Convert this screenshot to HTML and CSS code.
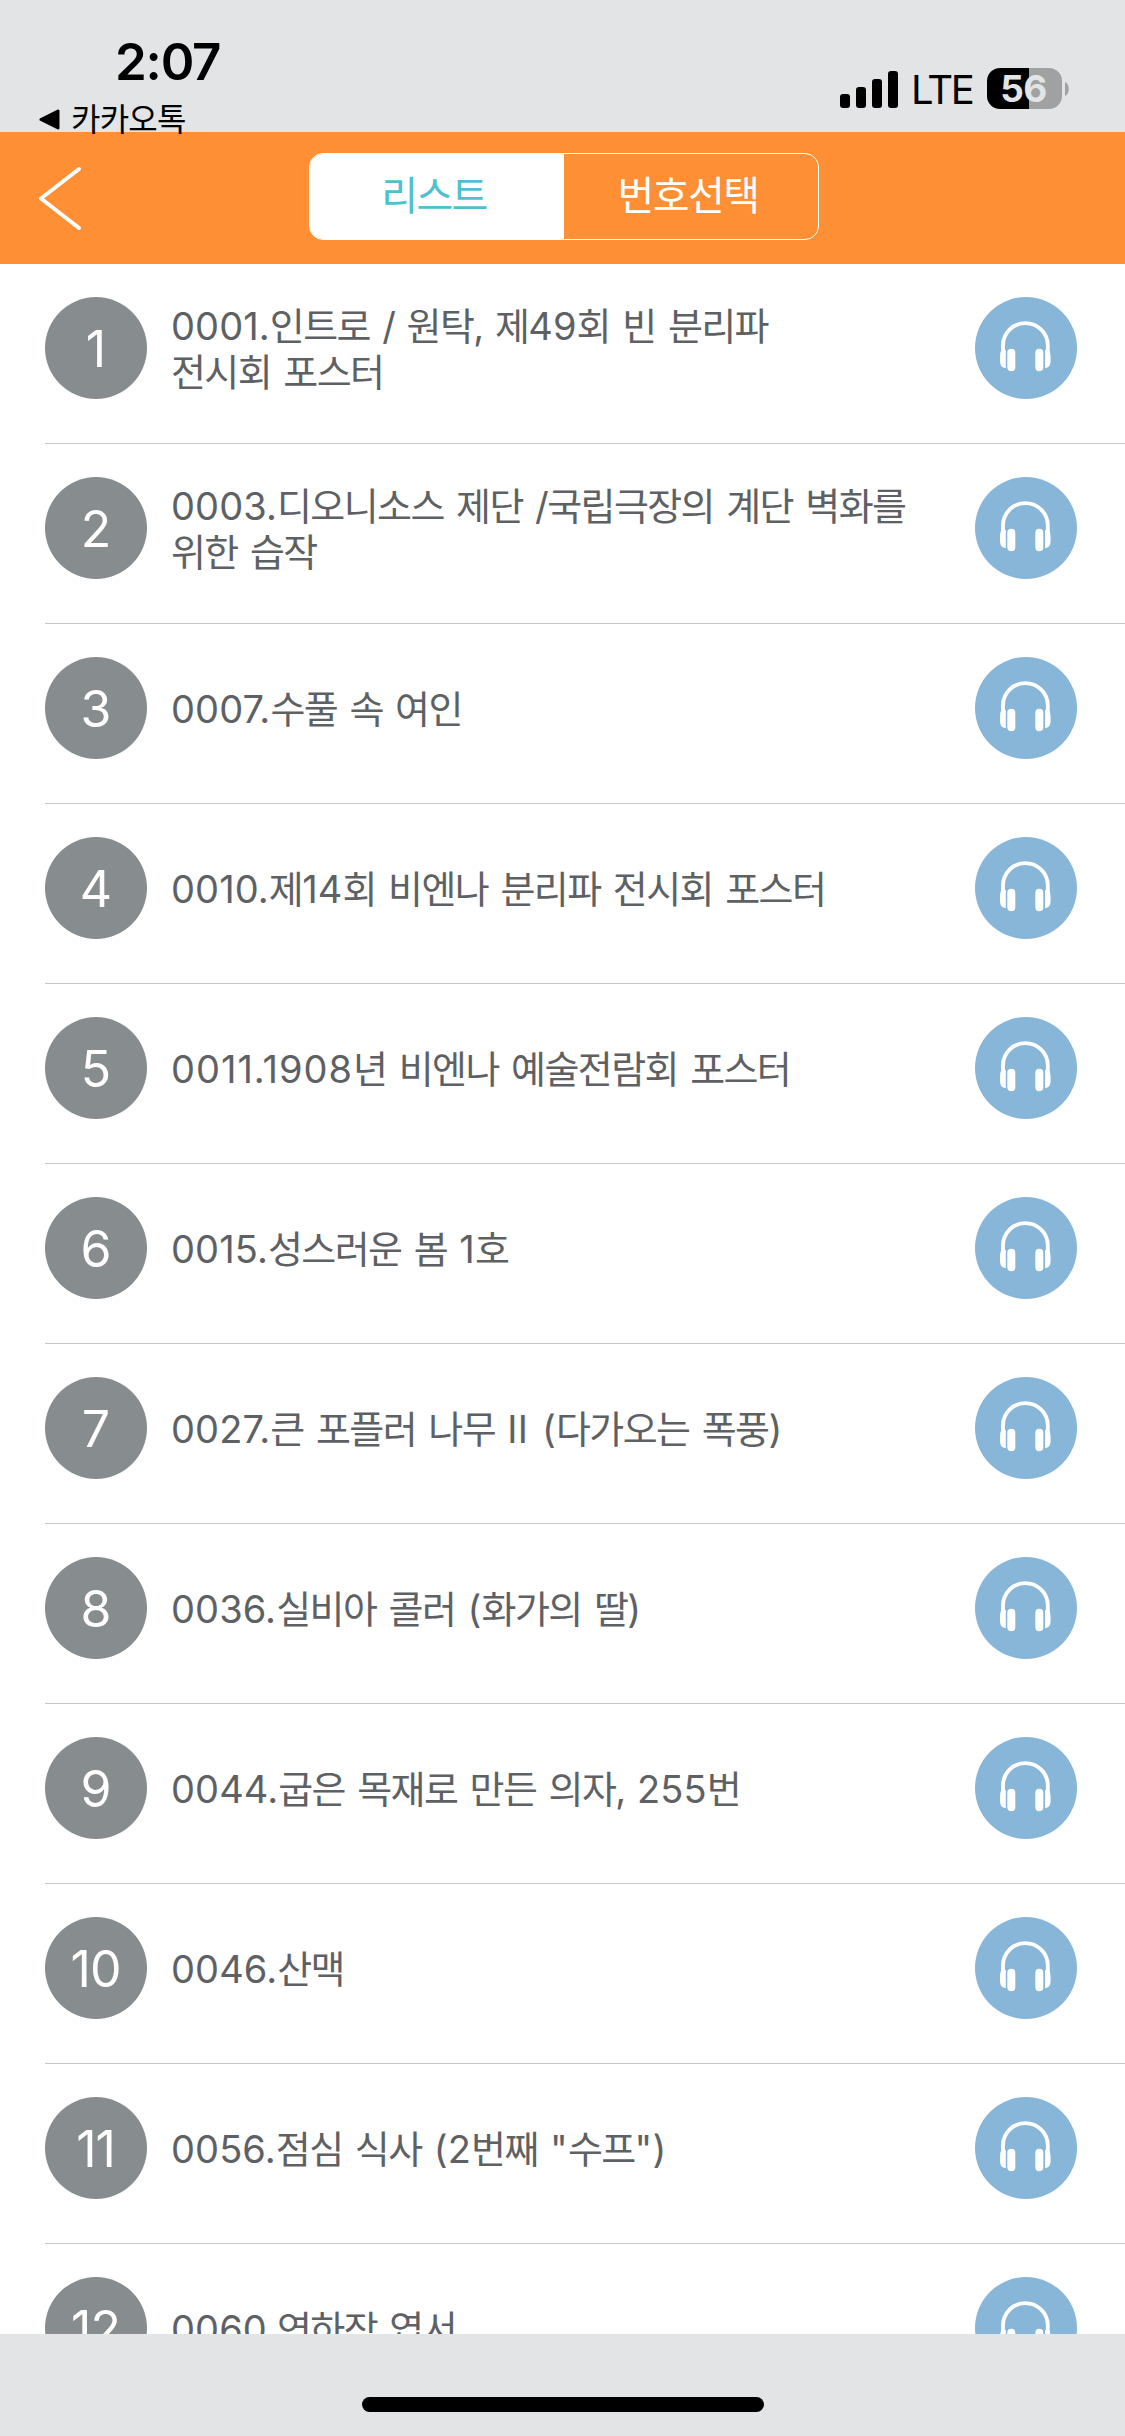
FILE: index.html
```html
<!DOCTYPE html>
<html lang="ko">
<head>
    <meta charset="UTF-8">
    <meta name="viewport" content="width=device-width, initial-scale=1.0">
    <title>리스트</title>
    <link rel="stylesheet" href="styles.css">
</head>
<body>
<svg class="defs" width="0" height="0">
    <symbol id="headphone" viewBox="0 0 102 102">
        <path d="M28 60V48.500a22.400 22.400 0 0 1 44.800 0V60" fill="none" stroke="#fff" stroke-width="3.800"/>
        <path d="M30.800 53v18c-3.400 0-5.800-2.600-5.800-7v-4c0-3 .6-5.500 1.400-7zM70 53v18c3.400 0 5.600-2.600 5.600-7v-4c0-3-.6-5.500-1.400-7z" fill="#fff"/>
        <rect x="32.300" y="51.800" width="8" height="22.400" rx="4" fill="#fff"/>
        <rect x="60.300" y="51.800" width="8" height="22.400" rx="4" fill="#fff"/>
    </symbol>
</svg>

<div class="status-bar">
    <div class="status-left">
        <div class="time">2:07</div>
        <div class="back-app">
            <svg width="21" height="21" viewBox="0 0 21 21"><path d="M2 10.500L19 2v17z" stroke="#000" stroke-width="3" stroke-linejoin="round"/></svg>
            <span>카카오톡</span>
        </div>
    </div>
    <div class="status-right">
        <svg class="signal" width="58" height="37" viewBox="0 0 58 37">
            <rect x="0" y="23" width="10" height="14" rx="3"/>
            <rect x="16" y="16" width="10" height="21" rx="3"/>
            <rect x="32" y="8" width="10" height="29" rx="3"/>
            <rect x="48" y="0" width="10" height="37" rx="3"/>
        </svg>
        <span class="network">LTE</span>
        <div class="battery">56</div>
        <svg class="battery-tip" width="4" height="14" viewBox="0 0 4 14"><path d="M0 0c5 2 5 12 0 14z" fill="#a0a1a3"/></svg>
    </div>
</div>

<div class="header">
    <svg class="back" width="46" height="66" viewBox="0 0 46 66"><path d="M42 4L4 33.500L42 63" fill="none" stroke="#fff" stroke-width="4" stroke-linecap="round" stroke-linejoin="round"/></svg>
    <div class="tabs">
        <div class="tab active">리스트</div>
        <div class="tab">번호선택</div>
    </div>
</div>

<div class="list">
    <div class="item">
        <div class="number">1</div>
        <div class="title"><span class="code">0001.</span>인트로 / 원탁, 제<span class="code">49</span>회 빈 분리파<br>전시회 포스터</div>
        <svg class="audio"><use href="#headphone"/></svg>
    </div>
    <div class="item">
        <div class="number">2</div>
        <div class="title"><span class="code">0003.</span>디오니소스 제단 /국립극장의 계단 벽화를<br>위한 습작</div>
        <svg class="audio"><use href="#headphone"/></svg>
    </div>
    <div class="item">
        <div class="number">3</div>
        <div class="title"><span class="code">0007.</span>수풀 속 여인</div>
        <svg class="audio"><use href="#headphone"/></svg>
    </div>
    <div class="item">
        <div class="number">4</div>
        <div class="title"><span class="code">0010.</span>제<span class="code">14</span>회 비엔나 분리파 전시회 포스터</div>
        <svg class="audio"><use href="#headphone"/></svg>
    </div>
    <div class="item">
        <div class="number">5</div>
        <div class="title"><span class="code wide">0011.1908</span>년 비엔나 예술전람회 포스터</div>
        <svg class="audio"><use href="#headphone"/></svg>
    </div>
    <div class="item">
        <div class="number">6</div>
        <div class="title"><span class="code">0015.</span>성스러운 봄 <span class="code">1</span>호</div>
        <svg class="audio"><use href="#headphone"/></svg>
    </div>
    <div class="item">
        <div class="number">7</div>
        <div class="title"><span class="code">0027.</span>큰 포플러 나무 <span class="code">II (</span>다가오는 폭풍<span class="code">)</span></div>
        <svg class="audio"><use href="#headphone"/></svg>
    </div>
    <div class="item">
        <div class="number">8</div>
        <div class="title"><span class="code">0036.</span>실비아 콜러 <span class="code">(</span>화가의 딸<span class="code">)</span></div>
        <svg class="audio"><use href="#headphone"/></svg>
    </div>
    <div class="item">
        <div class="number">9</div>
        <div class="title"><span class="code">0044.</span>굽은 목재로 만든 의자, <span class="code">255</span>번</div>
        <svg class="audio"><use href="#headphone"/></svg>
    </div>
    <div class="item">
        <div class="number">10</div>
        <div class="title"><span class="code">0046.</span>산맥</div>
        <svg class="audio"><use href="#headphone"/></svg>
    </div>
    <div class="item">
        <div class="number">11</div>
        <div class="title"><span class="code">0056.</span>점심 식사 <span class="code">(2</span>번째 <span class="code">"</span>수프<span class="code">")</span></div>
        <svg class="audio"><use href="#headphone"/></svg>
    </div>
    <div class="item">
        <div class="number">12</div>
        <div class="title"><span class="code">0060.</span>연하장 엽서</div>
        <svg class="audio"><use href="#headphone"/></svg>
    </div>
</div>

<div class="footer">
    <div class="home-indicator"></div>
</div>
</body>
</html>
```
FILE: styles.css
```css
* {
    box-sizing: border-box;
}

body {
    margin: 0;
    width: 1125px;
    height: 2436px;
    display: flex;
    flex-direction: column;
    overflow: hidden;
    background-color: #fff;
    font-family: Inter, "Noto Sans CJK KR", sans-serif;
}

.defs {
    display: block;
    position: absolute;
}

.status-bar {
    height: 132px;
    flex-shrink: 0;
    display: flex;
    justify-content: space-between;
    background-color: #e2e4e6;
    color: #000;
    position: relative;
    z-index: 1;
}

.status-left {
    padding: 32px 0 0 39px;
}

.time {
    padding-left: 76px;
    font-size: 51px;
    line-height: 60px;
    font-weight: 600;
    letter-spacing: -1.2px;
}

.back-app {
    display: flex;
    align-items: center;
    gap: 11px;
    margin-top: 7px;
    font-size: 32px;
    line-height: 40px;
    letter-spacing: -0.8px;
}

.back-app span {
    padding-top: 1px;
}

.status-right {
    display: flex;
    align-items: center;
    height: 41px;
    margin: 68px 56px 0 0;
}

.signal {
    margin-top: 1px;
}

.network {
    margin: 2px 0 0 13px;
    width: 76px;
    font-size: 40px;
    line-height: 41px;
    letter-spacing: -2.4px;
}

.battery {
    width: 75px;
    height: 41px;
    padding-right: 2px;
    border-radius: 13px;
    background: linear-gradient(to right, #000 42px, #a0a1a3 42px);
    color: #e2e4e6;
    font-size: 37px;
    line-height: 41px;
    font-weight: 700;
    text-align: center;
    letter-spacing: -0.5px;
}

.battery-tip {
    margin-left: 3px;
}

.header {
    height: 132px;
    flex-shrink: 0;
    display: flex;
    align-items: center;
    background-color: #ff8f35;
}

.back {
    margin: 0 0 0 37px;
}

.tabs {
    width: 510px;
    height: 87px;
    margin: 0 0 3px 226px;
    display: flex;
    border: 1.5px solid #fff;
    border-radius: 14px;
    overflow: hidden;
}

.tab {
    flex: 1;
    padding-right: 6px;
    color: #fff;
    font-size: 40px;
    line-height: 84px;
    text-align: center;
    letter-spacing: -1.6px;
}

.tab.active {
    background-color: #fff;
    color: #4fc0cf;
}

.list {
    height: 2070px;
    flex-shrink: 0;
    overflow: hidden;
}

.item {
    height: 180px;
    margin-left: 45px;
    padding: 33px 48px 44px 0;
    display: flex;
    align-items: center;
    border-bottom: 1px solid #c8c8c8;
}

.number {
    width: 102px;
    height: 102px;
    flex-shrink: 0;
    padding-right: 1px;
    border-radius: 50%;
    background-color: #878d8f;
    color: #fff;
    font-size: 50px;
    line-height: 104px;
    text-align: center;
    letter-spacing: -1px;
}

.title {
    flex: 1;
    margin-left: 24px;
    padding-top: 1px;
    color: #5e6164;
    font-size: 38px;
    line-height: 46px;
    letter-spacing: -1.6px;
    word-spacing: 3.2px;
    white-space: nowrap;
}

.code {
    letter-spacing: 0.1px;
}

.code.wide {
    letter-spacing: 1px;
}

.audio {
    width: 102px;
    height: 102px;
    flex-shrink: 0;
    border-radius: 50%;
    background-color: #87b6d9;
}

.footer {
    height: 102px;
    flex-shrink: 0;
    background-color: #e2e4e6;
    padding-top: 63px;
}

.home-indicator {
    width: 402px;
    height: 15px;
    margin: 0 auto;
    border-radius: 8px;
    background-color: #000;
}
```
